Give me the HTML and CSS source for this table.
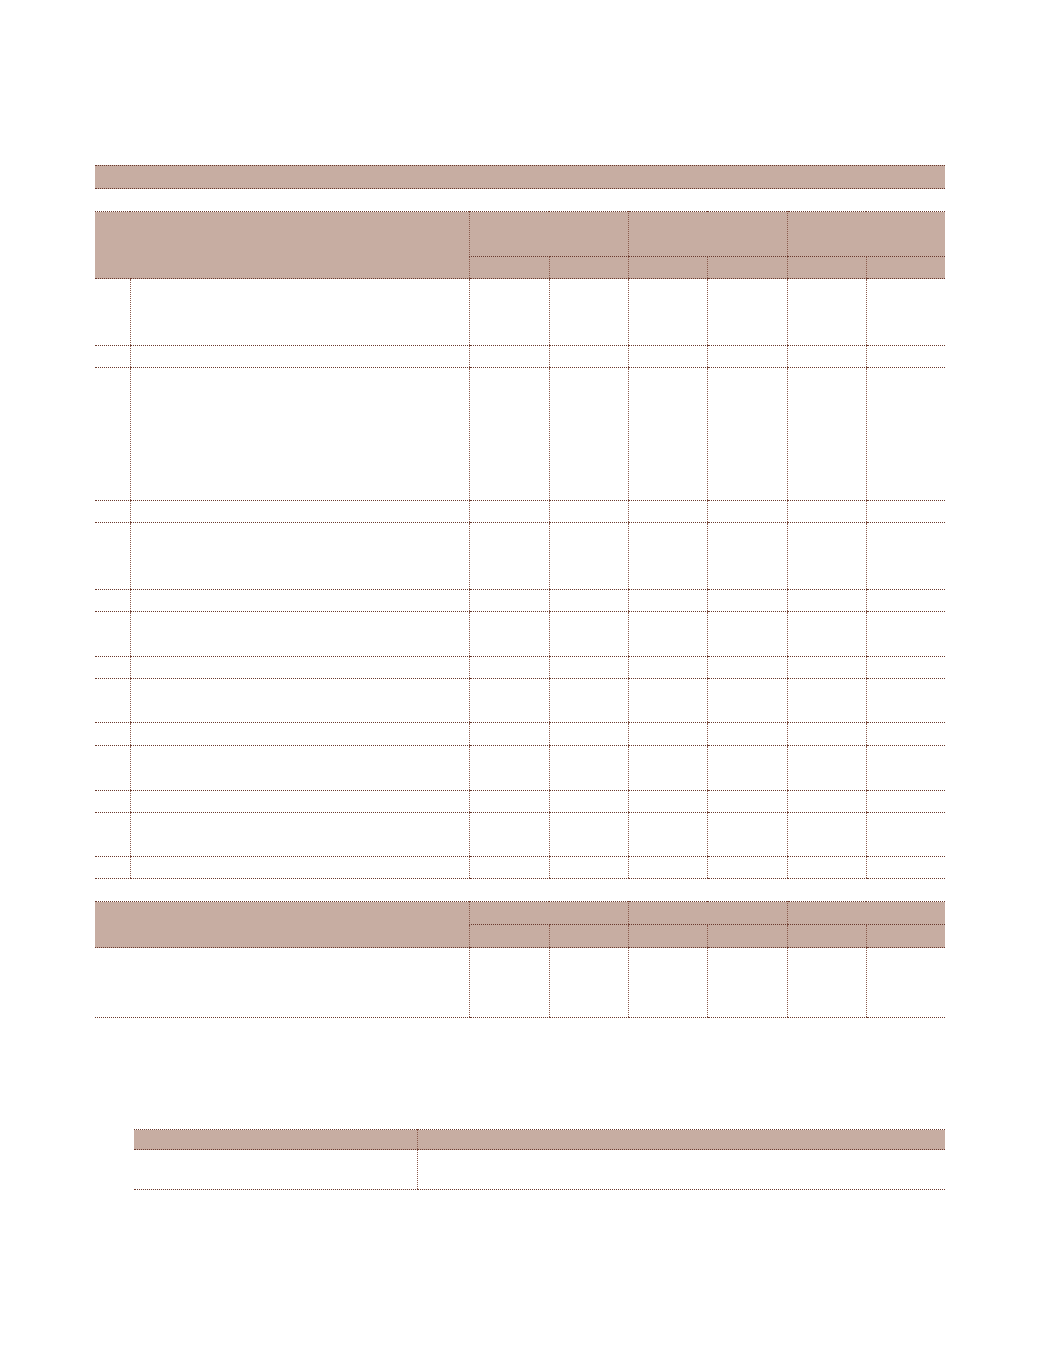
FILE: index.html
```html
<!DOCTYPE html>
<html lang="en">
<head>
<meta charset="utf-8">
<title>Table</title>
<link rel="stylesheet" href="styles.css">
</head>
<body>
<div class="page">
  <div class="titlebar"></div>

  <table class="grid t1">
    <colgroup>
      <col class="c-no"><col class="c-desc">
      <col class="c-v"><col class="c-v2"><col class="c-v2"><col class="c-v"><col class="c-v2"><col class="c-v2">
    </colgroup>
    <thead>
      <tr class="h45">
        <th colspan="2" rowspan="2" class="head"></th>
        <th colspan="2" class="head vl"></th>
        <th colspan="2" class="head vl"></th>
        <th colspan="2" class="head vl"></th>
      </tr>
      <tr class="h22">
        <th class="head vl"></th><th class="head vl"></th>
        <th class="head vl"></th><th class="head vl"></th>
        <th class="head vl"></th><th class="head vl"></th>
      </tr>
    </thead>
    <tbody>
      <tr style="height:67px"><td></td><td class="vl"></td><td class="vl"></td><td class="vl"></td><td class="vl"></td><td class="vl"></td><td class="vl"></td><td class="vl"></td></tr>
      <tr style="height:22px"><td></td><td class="vl"></td><td class="vl"></td><td class="vl"></td><td class="vl"></td><td class="vl"></td><td class="vl"></td><td class="vl"></td></tr>
      <tr style="height:133px"><td></td><td class="vl"></td><td class="vl"></td><td class="vl"></td><td class="vl"></td><td class="vl"></td><td class="vl"></td><td class="vl"></td></tr>
      <tr style="height:22px"><td></td><td class="vl"></td><td class="vl"></td><td class="vl"></td><td class="vl"></td><td class="vl"></td><td class="vl"></td><td class="vl"></td></tr>
      <tr style="height:67px"><td></td><td class="vl"></td><td class="vl"></td><td class="vl"></td><td class="vl"></td><td class="vl"></td><td class="vl"></td><td class="vl"></td></tr>
      <tr style="height:22px"><td></td><td class="vl"></td><td class="vl"></td><td class="vl"></td><td class="vl"></td><td class="vl"></td><td class="vl"></td><td class="vl"></td></tr>
      <tr style="height:45px"><td></td><td class="vl"></td><td class="vl"></td><td class="vl"></td><td class="vl"></td><td class="vl"></td><td class="vl"></td><td class="vl"></td></tr>
      <tr style="height:22px"><td></td><td class="vl"></td><td class="vl"></td><td class="vl"></td><td class="vl"></td><td class="vl"></td><td class="vl"></td><td class="vl"></td></tr>
      <tr style="height:44px"><td></td><td class="vl"></td><td class="vl"></td><td class="vl"></td><td class="vl"></td><td class="vl"></td><td class="vl"></td><td class="vl"></td></tr>
      <tr style="height:23px"><td></td><td class="vl"></td><td class="vl"></td><td class="vl"></td><td class="vl"></td><td class="vl"></td><td class="vl"></td><td class="vl"></td></tr>
      <tr style="height:45px"><td></td><td class="vl"></td><td class="vl"></td><td class="vl"></td><td class="vl"></td><td class="vl"></td><td class="vl"></td><td class="vl"></td></tr>
      <tr style="height:22px"><td></td><td class="vl"></td><td class="vl"></td><td class="vl"></td><td class="vl"></td><td class="vl"></td><td class="vl"></td><td class="vl"></td></tr>
      <tr style="height:44px"><td></td><td class="vl"></td><td class="vl"></td><td class="vl"></td><td class="vl"></td><td class="vl"></td><td class="vl"></td><td class="vl"></td></tr>
      <tr style="height:22px"><td></td><td class="vl"></td><td class="vl"></td><td class="vl"></td><td class="vl"></td><td class="vl"></td><td class="vl"></td><td class="vl"></td></tr>
    </tbody>
  </table>

  <table class="grid t2">
    <colgroup>
      <col class="c-first">
      <col class="c-v"><col class="c-v2"><col class="c-v2"><col class="c-v"><col class="c-v2"><col class="c-v2">
    </colgroup>
    <thead>
      <tr class="h23">
        <th rowspan="2" class="head"></th>
        <th colspan="2" class="head vl"></th>
        <th colspan="2" class="head vl"></th>
        <th colspan="2" class="head vl"></th>
      </tr>
      <tr class="h23">
        <th class="head vl"></th><th class="head vl"></th>
        <th class="head vl"></th><th class="head vl"></th>
        <th class="head vl"></th><th class="head vl"></th>
      </tr>
    </thead>
    <tbody>
      <tr style="height:70px"><td></td><td class="vl"></td><td class="vl"></td><td class="vl"></td><td class="vl"></td><td class="vl"></td><td class="vl"></td></tr>
    </tbody>
  </table>

  <table class="grid t3">
    <colgroup><col class="c3a"><col class="c3b"></colgroup>
    <thead>
      <tr class="h20"><th class="head"></th><th class="head vl"></th></tr>
    </thead>
    <tbody>
      <tr style="height:40px"><td></td><td class="vl"></td></tr>
    </tbody>
  </table>
</div>
</body>
</html>
```

FILE: styles.css
```css
html, body {
  margin: 0;
  padding: 0;
  background: #ffffff;
  font-family: "Liberation Sans", Arial, sans-serif;
}

.page {
  width: 850px;
  padding: 165px 0 0 95px;
}

.titlebar {
  height: 22px;
  background: #c7ada2;
  border-top: 1px dotted #6a3a2e;
  border-bottom: 1px dotted #6a3a2e;
}

.grid {
  width: 850px;
  border-collapse: collapse;
  table-layout: fixed;
  border-top: 1px dotted #6a3a2e;
}

.grid th,
.grid td {
  padding: 0;
  border-bottom: 1px dotted #6a3a2e;
}

.grid .vl {
  border-left: 1px dotted #8a5a4c;
}

.head {
  background: #c7ada2;
}

.t1 { margin-top: 22px; }
.t2 { margin-top: 22px; }
.t3 { margin: 111px 0 0 39px; width: 811px; }

.c-no { width: 35px; }
.c-desc { width: 339px; }
.c-first { width: 374px; }
.c-v { width: 80px; }
.c-v2 { width: 79px; }
.c3a { width: 283px; }
.c3b { width: 528px; }

.h45 { height: 45px; }
.h23 { height: 23px; }
.h22 { height: 22px; }
.h20 { height: 20px; }
```
